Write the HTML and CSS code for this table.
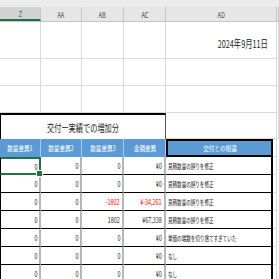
FILE: index.html
```html
<!DOCTYPE html>
<html lang="ja">

<head>
  <meta charset="UTF-8" />
  <meta name="viewport" content="width=device-width, initial-scale=1.0"/>
  <title>交付ー実績での増加分</title>
  <link rel="stylesheet" href="styles.css">
</head>

<body>

  <div class="sheet">
    <div class="strip"></div>

    <!-- Column letters -->
    <div class="row heads">
      <div class="ch active"><span>Z</span></div>
      <div class="ch"><span>AA</span></div>
      <div class="ch"><span>AB</span></div>
      <div class="ch"><span>AC</span></div>
      <div class="ch wide"><span>AD</span></div>
      <div class="ch"></div>
    </div>

    <div class="row r-date">
      <div class="c"></div><div class="c"></div><div class="c"></div><div class="c"></div>
      <div class="c wide date"><span>2024年9月11日</span></div>
      <div class="c"></div>
    </div>

    <div class="row r-blank">
      <div class="c"></div><div class="c"></div><div class="c"></div><div class="c"></div>
      <div class="c wide"></div><div class="c"></div>
    </div>
    <div class="row r-blank">
      <div class="c"></div><div class="c"></div><div class="c"></div><div class="c"></div>
      <div class="c wide"></div><div class="c"></div>
    </div>

    <!-- Table title -->
    <div class="row r-title">
      <div class="title"><span>交付ー実績での増加分</span></div>
      <div class="c wide"></div>
      <div class="c"></div>
    </div>

    <div class="row r-head">
      <div class="hd"><span>数量差異1</span></div>
      <div class="hd"><span>数量差異2</span></div>
      <div class="hd"><span>数量差異3</span></div>
      <div class="hd"><span>金額差異</span></div>
      <div class="hd note"><span>交付との相違</span></div>
      <div class="c"></div>
    </div>

    <div class="row r-data">
      <div class="d num first selected"><span>0</span></div>
      <div class="d num"><span>0</span></div>
      <div class="d num"><span>0</span></div>
      <div class="d num"><span>¥0</span></div>
      <div class="d note"><span>見積数量の誤りを修正</span></div>
      <div class="c"></div>
    </div>
    <div class="row r-data">
      <div class="d num first"><span>0</span></div>
      <div class="d num"><span>0</span></div>
      <div class="d num"><span>0</span></div>
      <div class="d num"><span>¥0</span></div>
      <div class="d note"><span>見積数量の誤りを修正</span></div>
      <div class="c"></div>
    </div>
    <div class="row r-data">
      <div class="d num first"><span>0</span></div>
      <div class="d num"><span>0</span></div>
      <div class="d num red"><span>-1802</span></div>
      <div class="d num red"><span>¥-34,261</span></div>
      <div class="d note"><span>見積数量の誤りを修正</span></div>
      <div class="c"></div>
    </div>
    <div class="row r-data">
      <div class="d num first"><span>0</span></div>
      <div class="d num"><span>0</span></div>
      <div class="d num"><span>1802</span></div>
      <div class="d num"><span>¥67,338</span></div>
      <div class="d note"><span>見積数量の誤りを修正</span></div>
      <div class="c"></div>
    </div>
    <div class="row r-data">
      <div class="d num first"><span>0</span></div>
      <div class="d num"><span>0</span></div>
      <div class="d num"><span>0</span></div>
      <div class="d num"><span>¥0</span></div>
      <div class="d note"><span>単価の端数を切り捨てすぎていた</span></div>
      <div class="c"></div>
    </div>
    <div class="row r-data">
      <div class="d num first"><span>0</span></div>
      <div class="d num"><span>0</span></div>
      <div class="d num"><span>0</span></div>
      <div class="d num"><span>¥0</span></div>
      <div class="d note"><span>なし</span></div>
      <div class="c"></div>
    </div>
    <div class="row r-data">
      <div class="d num first"><span>0</span></div>
      <div class="d num"><span>0</span></div>
      <div class="d num"><span>0</span></div>
      <div class="d num"><span>¥0</span></div>
      <div class="d note"><span>なし</span></div>
      <div class="c"></div>
    </div>
  </div>

</body>
</html>
```

FILE: styles.css
```css
:root {
  --grid: #dadada;
  --head-bg: #e6e6e6;
  --excel-green: #217346;
  --blue: #5b9bd5;
}

* {
  margin: 0;
  padding: 0;
  box-sizing: border-box;
  font-family: "Noto Sans CJK JP", "Liberation Sans", sans-serif;
}

body {
  background: #ffffff;
  width: 279px;
  height: 279px;
  overflow: hidden;
}

.sheet {
  width: 279px;
}

.strip {
  height: 7px;
  background: #ececec;
}

.row {
  display: grid;
  grid-template-columns: 41px 41px 42px 42px 107px 4px 1fr;
}

.row span {
  display: inline-block;
  white-space: nowrap;
}

.wide {
  grid-column: span 2;
}

/* column letters */
.heads {
  height: 15px;
  background: var(--head-bg);
  border-bottom: 1px solid #c4c4c4;
}

.ch {
  display: flex;
  justify-content: center;
  align-items: center;
  border-right: 1px solid #c9c9c9;
  font-size: 8px;
  color: #444;
}

.ch span {
  transform: scaleX(0.7);
}

.ch.active {
  background: #d3d3d3;
  color: var(--excel-green);
  border-bottom: 2px solid var(--excel-green);
}

/* plain cells */
.c {
  border-right: 1px solid var(--grid);
  border-bottom: 1px solid var(--grid);
}

.r-date {
  height: 37px;
}

.date {
  display: flex;
  justify-content: flex-end;
  align-items: center;
  padding: 5px 8px 0 0;
  font-size: 11px;
  color: #222;
}

.date span {
  transform: scaleX(0.66);
  transform-origin: right center;
}

.r-blank {
  height: 27px;
}

/* table */
.r-title {
  height: 26px;
}

.title {
  grid-column: span 4;
  display: flex;
  justify-content: center;
  align-items: center;
  border-top: 2px solid #000;
  border-left: 1px solid #000;
  border-right: 1px solid #555;
  font-size: 10px;
  color: #222;
}

.title span {
  transform: scaleX(0.72);
}

.r-head {
  height: 18px;
}

.hd {
  display: flex;
  justify-content: center;
  align-items: center;
  background: var(--blue);
  border-right: 1px solid #a9c9e8;
  color: #ffffff;
  font-size: 7px;
}

.hd span {
  transform: scaleX(0.8);
}

.hd.note {
  border: 2px solid #000;
  border-right-width: 2px;
}

.r-data {
  height: 18px;
}

.d {
  display: flex;
  align-items: center;
  border-bottom: 1px solid #000;
  border-right: 2px solid #b4b8be;
  color: #222;
  font-size: 8px;
}

.d.first {
  border-left: 1px solid #000;
}

.num {
  justify-content: flex-end;
  padding-right: 2px;
}

.num span {
  transform: scaleX(0.68);
  transform-origin: right center;
}

.red {
  color: #ff0000;
}

.d.note {
  padding-left: 2px;
  border-right: 2px solid #000;
  font-size: 7px;
}

.d.note span {
  transform: scaleX(0.65);
  transform-origin: left center;
}

/* active cell */
.selected {
  position: relative;
  border: 2px solid var(--excel-green);
}

.selected::after {
  content: "";
  position: absolute;
  right: -4px;
  bottom: -4px;
  width: 5px;
  height: 5px;
  background: var(--excel-green);
  border: 1px solid #fff;
}
```
